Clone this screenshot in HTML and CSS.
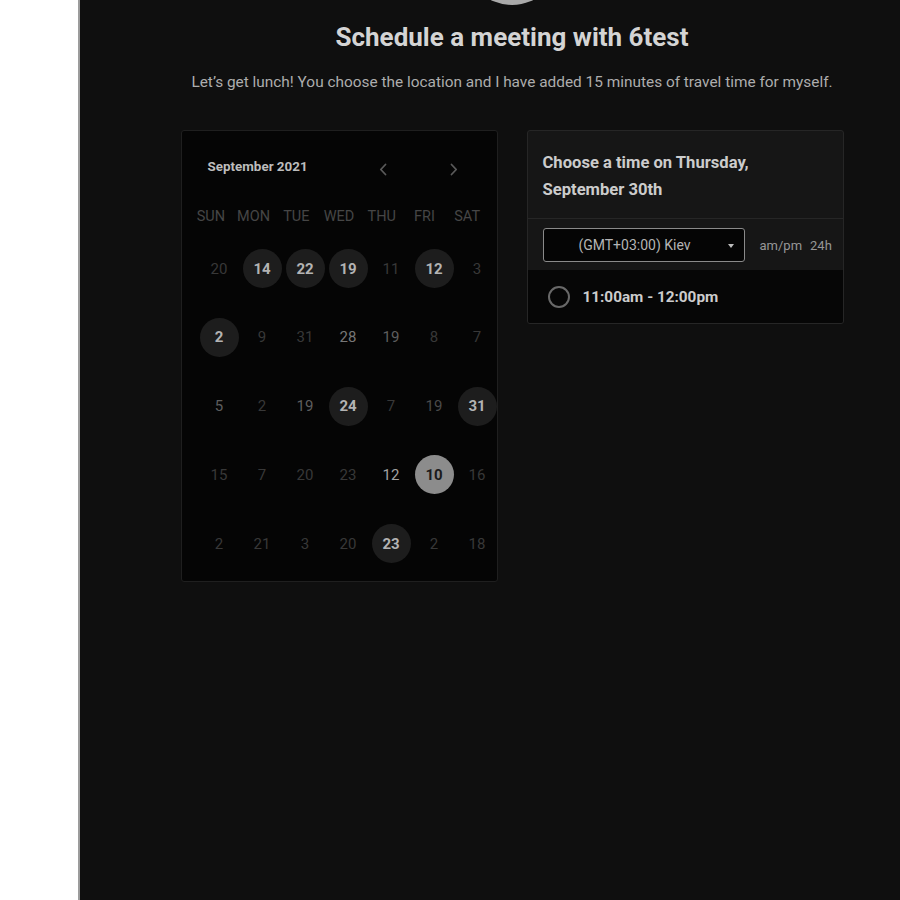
FILE: index.html
```html
<!DOCTYPE html>
<html lang="en">
<head>
    <meta charset="UTF-8">
    <meta name="viewport" content="width=device-width, initial-scale=1.0">
    <title>Schedule a meeting with 6test</title>
    <link rel="stylesheet" href="styles.css">
</head>
<body>
    <!-- white strip on the left, the booking page sits to the right of it -->
    <div class="sidebar"></div>

    <main class="booking">
        <div class="avatar"></div>
        <h1 class="title">Schedule a meeting with 6test</h1>
        <p class="subtitle">Let’s get lunch! You choose the location and I have added 15 minutes of travel time for myself.</p>

        <div class="cards">
            <!-- Calendar -->
            <section class="calendar">
                <div class="cal-head">
                    <span class="cal-month">September 2021</span>
                    <div class="cal-nav">
                        <button class="nav-btn" aria-label="Previous month">
                            <svg width="8" height="13" viewBox="0 0 8 13"><path d="M6.5 1.5 L1.8 6.5 L6.5 11.5" /></svg>
                        </button>
                        <button class="nav-btn" aria-label="Next month">
                            <svg width="8" height="13" viewBox="0 0 8 13"><path d="M1.5 1.5 L6.2 6.5 L1.5 11.5" /></svg>
                        </button>
                    </div>
                </div>

                <div class="weekdays">
                    <span>SUN</span><span>MON</span><span>TUE</span><span>WED</span><span>THU</span><span>FRI</span><span>SAT</span>
                </div>

                <div class="days">
                    <span class="day">20</span>
                    <span class="day open">14</span>
                    <span class="day open">22</span>
                    <span class="day open">19</span>
                    <span class="day">11</span>
                    <span class="day open">12</span>
                    <span class="day">3</span>

                    <span class="day open">2</span>
                    <span class="day">9</span>
                    <span class="day">31</span>
                    <span class="day tone-3">28</span>
                    <span class="day tone-2">19</span>
                    <span class="day">8</span>
                    <span class="day">7</span>

                    <span class="day tone-2">5</span>
                    <span class="day">2</span>
                    <span class="day tone-2">19</span>
                    <span class="day open">24</span>
                    <span class="day">7</span>
                    <span class="day tone-1">19</span>
                    <span class="day open">31</span>

                    <span class="day">15</span>
                    <span class="day">7</span>
                    <span class="day">20</span>
                    <span class="day">23</span>
                    <span class="day tone-4">12</span>
                    <span class="day selected">10</span>
                    <span class="day">16</span>

                    <span class="day">2</span>
                    <span class="day">21</span>
                    <span class="day">3</span>
                    <span class="day">20</span>
                    <span class="day open">23</span>
                    <span class="day">2</span>
                    <span class="day">18</span>
                </div>
            </section>

            <!-- Time slots -->
            <section class="times">
                <div class="times-head">Choose a time on Thursday, September 30th</div>
                <div class="times-bar">
                    <div class="tz-select">
                        <span>(GMT+03:00) Kiev</span>
                        <span class="caret"></span>
                    </div>
                    <div class="format">
                        <span>am/pm</span>
                        <span>24h</span>
                    </div>
                </div>
                <div class="slot">
                    <span class="radio"></span>
                    <span class="slot-label">11:00am - 12:00pm</span>
                </div>
            </section>
        </div>
    </main>
</body>
</html>
```

FILE: styles.css
```css
html, body {
    margin: 0;
    padding: 0;
    height: 100%;
    overflow: hidden;
}

body {
    display: flex;
    font-family: Roboto, 'Liberation Sans', sans-serif;
    background: #ffffff;
}

/* Left white strip with its thin grey edge */
.sidebar {
    width: 78px;
    flex-shrink: 0;
    background: #ffffff;
    border-right: 2px solid #9c9c9c;
}

/* Dark booking area */
.booking {
    flex: 1;
    background: #0f0f0f;
    display: flex;
    flex-direction: column;
    align-items: center;
    padding-left: 44px;
}

.avatar {
    width: 96px;
    height: 96px;
    border-radius: 50%;
    background: #a9a9a9;
    margin-top: -91px;
    flex-shrink: 0;
}

.title {
    margin: 18px 0 0;
    font-size: 26px;
    line-height: 28px;
    font-weight: 700;
    color: #d4d4d4;
}

.subtitle {
    margin: 21px 0 0;
    font-size: 15.4px;
    line-height: 20px;
    color: #adadad;
}

.cards {
    display: flex;
    align-items: flex-start;
    gap: 29px;
    margin-top: 38px;
}

/* Calendar card */
.calendar {
    width: 317px;
    box-sizing: border-box;
    background: #050505;
    border: 1px solid #1f1f1f;
    border-radius: 3px;
    padding: 0 8px 18px;
}

.cal-head {
    display: flex;
    align-items: center;
    height: 40px;
    margin-top: 18px;
    padding: 0 17px 0 18px;
}

.cal-month {
    flex: 1;
    font-size: 13.4px;
    font-weight: 700;
    color: #bdbdbd;
    margin-top: -6px;
}

.cal-nav {
    display: flex;
    gap: 35px;
}

.nav-btn {
    width: 36px;
    height: 36px;
    padding: 0;
    border: none;
    background: transparent;
    display: flex;
    align-items: center;
    justify-content: center;
}

.nav-btn svg path {
    fill: none;
    stroke: #5a5a5a;
    stroke-width: 1.8;
    stroke-linecap: round;
    stroke-linejoin: round;
}

.weekdays {
    display: grid;
    grid-template-columns: repeat(7, 1fr);
    margin-top: 18px;
    font-size: 14.5px;
    line-height: 20px;
    color: #464646;
    text-align: center;
}

.days {
    display: grid;
    grid-template-columns: repeat(7, 43px);
    row-gap: 29.75px;
    margin-top: 22px;
    padding-left: 8px;
}

.day {
    width: 39px;
    height: 39px;
    justify-self: center;
    display: flex;
    align-items: center;
    justify-content: center;
    border-radius: 50%;
    font-size: 15px;
    color: #383838;
}

.day.open {
    background: #1d1d1d;
    color: #b3b3b3;
    font-weight: 700;
}

.day.selected {
    background: #8c8c8c;
    color: #1b1b1b;
    font-weight: 700;
}

.day.tone-1 { color: #4a4a4a; }
.day.tone-2 { color: #5e5e5e; }
.day.tone-3 { color: #777777; }
.day.tone-4 { color: #a2a2a2; }

/* Time slot card */
.times {
    width: 317px;
    box-sizing: border-box;
    background: #161616;
    border: 1px solid #262626;
    border-radius: 3px;
    overflow: hidden;
}

.times-head {
    padding: 18px 50px 15px 15px;
    font-size: 16.6px;
    line-height: 27px;
    font-weight: 700;
    color: #cccccc;
    border-bottom: 1px solid #262626;
}

.times-bar {
    display: flex;
    align-items: center;
    gap: 15px;
    height: 50px;
    padding: 1px 15px 0;
}

.tz-select {
    width: 202px;
    height: 34px;
    flex-shrink: 0;
    box-sizing: border-box;
    display: flex;
    align-items: center;
    justify-content: center;
    position: relative;
    background: #050505;
    border: 1px solid #8a8a8a;
    border-radius: 3px;
    font-size: 14px;
    color: #b4b4b4;
    padding-right: 18px;
}

.caret {
    position: absolute;
    right: 10px;
    top: 15px;
    border-left: 3.5px solid transparent;
    border-right: 3.5px solid transparent;
    border-top: 4px solid #bdbdbd;
}

.format {
    display: flex;
    gap: 8px;
    font-size: 13px;
    color: #969696;
}

.slot {
    display: flex;
    align-items: center;
    gap: 13px;
    height: 52px;
    padding: 1px 0 0 20px;
    background: #060606;
}

.radio {
    width: 22px;
    height: 22px;
    box-sizing: border-box;
    border: 2px solid #686868;
    border-radius: 50%;
}

.slot-label {
    font-size: 15.3px;
    font-weight: 700;
    color: #cccccc;
}
```
